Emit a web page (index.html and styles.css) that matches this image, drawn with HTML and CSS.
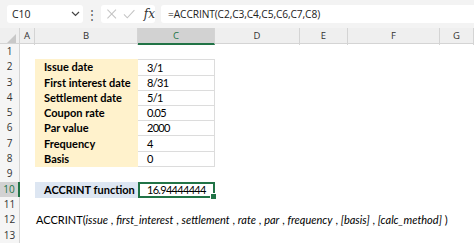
FILE: index.html
```html
<!DOCTYPE html>
<html lang="en">
<head>
  <meta charset="UTF-8" />
  <title>ACCRINT function</title>
  <link rel="stylesheet" href="styles.css">
</head>
<body>

  <!-- Formula bar -->
  <div class="formula-bar">
    <div class="name-box">
      <span>C10</span>
      <svg class="chevron" width="9" height="6" viewBox="0 0 9 6"><path d="M1 1 L4.5 4.5 L8 1" fill="none" stroke="#444" stroke-width="1.2"/></svg>
    </div>
    <div class="dots">⋮</div>
    <div class="fx-box">
      <svg width="12" height="12" viewBox="0 0 12 12"><path d="M1.5 1.5 L10.5 10.5 M10.5 1.5 L1.5 10.5" stroke="#c4c4c4" stroke-width="1.1"/></svg>
      <svg width="13" height="12" viewBox="0 0 13 12"><path d="M1 6.5 L4.5 10 L12 2" fill="none" stroke="#c4c4c4" stroke-width="1.1"/></svg>
      <span class="fx">fx</span>
    </div>
    <div class="formula">=ACCRINT(C2,C3,C4,C5,C6,C7,C8)</div>
  </div>

  <!-- Sheet -->
  <div class="sheet">
    <div class="row col-heads">
      <div class="corner"><span class="tri"></span></div>
      <div class="ch">A</div>
      <div class="ch">B</div>
      <div class="ch active">C</div>
      <div class="ch">D</div>
      <div class="ch">E</div>
      <div class="ch">F</div>
      <div class="ch">G</div>
    </div>

    <div class="row"><div class="rh">1</div><div></div><div></div><div></div><div></div><div></div><div></div><div></div></div>
    <div class="row"><div class="rh">2</div><div></div><div class="lbl">Issue date</div><div class="val first">3/1</div><div></div><div></div><div></div><div></div></div>
    <div class="row"><div class="rh">3</div><div></div><div class="lbl">First interest date</div><div class="val">8/31</div><div></div><div></div><div></div><div></div></div>
    <div class="row"><div class="rh">4</div><div></div><div class="lbl">Settlement date</div><div class="val">5/1</div><div></div><div></div><div></div><div></div></div>
    <div class="row"><div class="rh">5</div><div></div><div class="lbl">Coupon rate</div><div class="val">0.05</div><div></div><div></div><div></div><div></div></div>
    <div class="row"><div class="rh">6</div><div></div><div class="lbl">Par value</div><div class="val">2000</div><div></div><div></div><div></div><div></div></div>
    <div class="row"><div class="rh">7</div><div></div><div class="lbl">Frequency</div><div class="val">4</div><div></div><div></div><div></div><div></div></div>
    <div class="row"><div class="rh">8</div><div></div><div class="lbl">Basis</div><div class="val">0</div><div></div><div></div><div></div><div></div></div>
    <div class="row"><div class="rh">9</div><div></div><div></div><div></div><div></div><div></div><div></div><div></div></div>
    <div class="row"><div class="rh active">10</div><div></div><div class="lbl blue">ACCRINT function</div><div class="val result">16.94444444<span class="handle"></span></div><div></div><div></div><div></div><div></div></div>
    <div class="row"><div class="rh">11</div><div></div><div></div><div></div><div></div><div></div><div></div><div></div></div>
    <div class="row"><div class="rh">12</div><div></div><div class="syntax">ACCRINT(<i>issue</i> , <i>first_interest</i> , <i>settlement</i> , <i>rate</i> , <i>par</i> , <i>frequency</i> , <i>[basis]</i> , <i>[calc_method]</i> )</div></div>
    <div class="row"><div class="rh">13</div><div></div><div></div><div></div><div></div><div></div><div></div><div></div></div>
  </div>

</body>
</html>
```

FILE: styles.css
```css
body {
  margin: 0;
  background: #ffffff;
  font-family: Lato, "Liberation Sans", sans-serif;
  color: #000;
  width: 474px;
  overflow: hidden;
}

/* Formula bar */
.formula-bar {
  display: flex;
  align-items: center;
  height: 28px;
  padding: 0 0 0 7px;
  background: #f3f3f3;
  font-family: "Open Sans", "Liberation Sans", sans-serif;
  font-size: 10.5px;
  color: #222;
}

.name-box {
  display: flex;
  align-items: center;
  justify-content: space-between;
  width: 76px;
  height: 18px;
  padding: 0 3px 0 5px;
  box-sizing: border-box;
  background: #fff;
  border-radius: 3px;
}

.dots {
  width: 18px;
  text-align: center;
  color: #555;
  font-size: 12px;
}

.fx-box {
  display: flex;
  align-items: center;
  gap: 6px;
  width: 54px;
  height: 18px;
  padding-left: 5px;
  box-sizing: border-box;
  background: #fff;
  border-radius: 3px;
}

.fx {
  font-family: "DejaVu Serif", "Liberation Serif", serif;
  font-style: italic;
  font-size: 12px;
  color: #333;
  margin-left: 2px;
}

.formula {
  flex: 1;
  height: 18px;
  line-height: 18px;
  margin-left: 6px;
  padding-left: 7px;
  background: #fff;
  border-radius: 3px 0 0 3px;
  font-size: 10.2px;
  letter-spacing: -0.1px;
}

/* Sheet grid */
.row {
  display: grid;
  grid-template-columns: 20px 15px 103px 77px 85px 48px 92px 1fr;
  height: 15.3px;
  font-size: 11px;
  line-height: 15px;
}

.col-heads {
  height: 15px;
  background: #efefef;
  border-bottom: 1px solid #d4d4d4;
  font-family: "Open Sans", "Liberation Sans", sans-serif;
  font-size: 9.5px;
  color: #333;
}

.corner {
  position: relative;
  border-right: 1px solid #d4d4d4;
}

.tri {
  position: absolute;
  right: 3px;
  bottom: 2px;
  width: 0;
  height: 0;
  border-left: 9px solid transparent;
  border-bottom: 9px solid #c8c8c8;
}

.ch {
  text-align: center;
  border-right: 1px solid #d4d4d4;
}

.ch.active {
  background: #d2d2d2;
  border-bottom: 2px solid #217346;
  color: #217346;
}

.rh {
  background: #f5f5f5;
  border-right: 1px solid #d4d4d4;
  text-align: center;
  font-family: "Open Sans", "Liberation Sans", sans-serif;
  font-size: 10px;
  color: #333;
}

.rh.active {
  background: #d2d2d2;
  color: #217346;
  border-right: 2px solid #217346;
}

.lbl {
  background: #fff2cc;
  font-weight: bold;
  padding-left: 9px;
  white-space: nowrap;
}

.lbl.blue {
  background: #dde6f2;
}

.val {
  padding-left: 9px;
  border: 1px solid #dcdcdc;
  border-top: none;
  border-left: none;
  letter-spacing: -0.7px;
}

.val.first {
  border-top: 1px solid #dcdcdc;
}

.val.result {
  position: relative;
  border: 2px solid #217346;
  padding-left: 7px;
  line-height: 12px;
}

.handle {
  position: absolute;
  right: -4px;
  bottom: -4px;
  width: 5px;
  height: 5px;
  background: #217346;
  border: 1px solid #fff;
}

.syntax {
  grid-column: 3 / -1;
  padding-left: 1px;
  white-space: nowrap;
  font-size: 11px;
}
```
